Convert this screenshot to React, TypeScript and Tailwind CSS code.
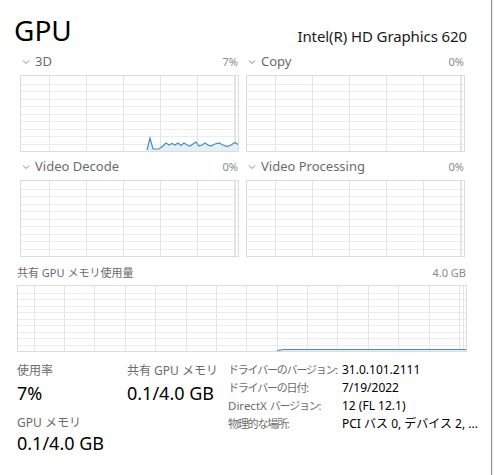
import React from 'react';

const font = { fontFamily: '"Noto Sans", "Noto Sans CJK JP", sans-serif' };

type GridProps = {
  w: number;
  h: number;
  step: number;
  offset: number;
  rows: number;
  extra?: number[];
  line?: string;
};

function Grid({ w, h, step, offset, rows, extra = [], line }: GridProps) {
  const xs: number[] = [];
  for (let x = offset; x < w; x += step) xs.push(x);
  const ys: number[] = [];
  for (let i = 1; i < rows; i++) ys.push((h * i) / rows);
  return (
    <svg width={w} height={h} className="block">
      {ys.map((y) => (
        <line key={'h' + y} x1={0} x2={w} y1={Math.round(y) + 0.5} y2={Math.round(y) + 0.5} stroke="#ececec" strokeWidth={1} />
      ))}
      {[...xs, ...extra].map((x) => (
        <line key={'v' + x} x1={Math.round(x) + 0.5} x2={Math.round(x) + 0.5} y1={0} y2={h} stroke="#e4e4e4" strokeWidth={1} />
      ))}
      {line && (
        <>
          <path d={`${line} L${w},${h} L${line.split(' ')[0].slice(1).split(',')[0]},${h} Z`} fill="#e3f0f8" stroke="none" />
          <path d={line} fill="none" stroke="#4a8db7" strokeWidth={1.2} />
        </>
      )}
    </svg>
  );
}

function Chevron() {
  return (
    <svg width="8" height="6" viewBox="0 0 8 6" className="mr-[5px]">
      <path d="M1 1.5 L4 4.5 L7 1.5" fill="none" stroke="#8a8a8a" strokeWidth="1" />
    </svg>
  );
}

function Engine({ name, value, line }: { name: string; value: string; line?: string }) {
  return (
    <div className="w-[218px]">
      <div className="flex items-center justify-between h-[16px] text-[13px] text-[#6b6b6b]">
        <div className="flex items-center pl-[2px]">
          <Chevron />
          <span>{name}</span>
        </div>
        <span className="text-[11px] text-[#8a8a8a]">{value}</span>
      </div>
      <div className="mt-[5px] border border-[#dcdcdc] h-[77px] w-[219px]">
        <Grid w={217} h={75} step={37} offset={28} rows={10} extra={[214]} line={line} />
      </div>
    </div>
  );
}

const spark =
  'M126,74 L129,62 L132,73 L138,73 L142,70 L145,67 L148,69 L151,67.5 L154,69 L157,67 L160,69.5 L163,67 L166,69 L169,70 L172,68 L175,66 L178,70 L181,69 L184,67 L187,69 L190,70 L194,68 L198,67 L202,69 L206,70.5 L210,69 L214,66.5 L217,68.5';

const label = 'h-[18px] leading-[18px] text-[11.5px] text-[#6b6b6b] whitespace-nowrap overflow-hidden';
const jp = 'text-[11px] tracking-[-1.2px]';
const value = 'h-[18px] leading-[18px] text-[12px] text-black whitespace-nowrap overflow-hidden';

export default function App() {
  return (
    <div className="flex w-[494px] h-[475px] bg-white overflow-hidden" style={font}>
      <div className="w-[491px] h-full relative">
        <div className="flex items-end justify-between pl-[14px] pr-[24px] pt-[13px]">
          <h1 className="text-[28px] leading-[34px] text-black">GPU</h1>
          <span className="text-[15px] leading-[20px] text-[#1a1a1a] mb-[1px] tracking-[-0.1px]">Intel(R) HD Graphics 620</span>
        </div>

        <div className="flex gap-[8px] pl-[20px] mt-[7px]">
          <Engine name="3D" value="7%" line={spark} />
          <Engine name="Copy" value="0%" />
        </div>

        <div className="flex gap-[8px] pl-[20px] mt-[7px]">
          <Engine name="Video Decode" value="0%" />
          <Engine name="Video Processing" value="0%" />
        </div>

        <div className="pl-[17px] pr-[25px] mt-[8px]">
          <div className="flex items-center justify-between h-[16px] text-[11px] text-[#6b6b6b]">
            <span>共有 GPU メモリ使用量</span>
            <span className="text-[#8a8a8a]">4.0 GB</span>
          </div>
          <div className="mt-[4px] border border-[#dcdcdc] w-[450px] h-[67px]">
            <Grid
              w={448}
              h={65}
              step={30.4}
              offset={15.5}
              rows={10}
              extra={[445]}
              line="M259,64.5 L266,63.5 L448,63.5"
            />
          </div>
        </div>

        <div className="flex items-start pl-[17px] mt-[10px]">
          <div className="w-[110px]">
            <div className="text-[12px] leading-[17px] text-[#6b6b6b]">使用率</div>
            <div className="text-[18px] leading-[24px] text-black mt-[2px]">7%</div>
            <div className="text-[12px] leading-[17px] text-[#6b6b6b] mt-[9px]">GPU メモリ</div>
            <div className="text-[18px] leading-[24px] text-black">0.1/4.0 GB</div>
          </div>
          <div className="w-[101px]">
            <div className="text-[12px] leading-[17px] text-[#6b6b6b]">共有 GPU メモリ</div>
            <div className="text-[18px] leading-[24px] text-black mt-[2px]">0.1/4.0 GB</div>
          </div>
          <div className="grid grid-cols-[114px_1fr] content-start -mt-[1px]">
            <span className={label}>
              <span className={jp}>ドライバーのバージョン:</span>
            </span>
            <span className={value}>31.0.101.2111</span>
            <span className={label}>
              <span className={jp}>ドライバーの日付:</span>
            </span>
            <span className={value}>7/19/2022</span>
            <span className={label}>
              DirectX <span className={jp}>バージョン:</span>
            </span>
            <span className={value}>12 (FL 12.1)</span>
            <span className={label}>
              <span className={jp}>物理的な場所:</span>
            </span>
            <span className={value}>PCI バス 0, デバイス 2, ...</span>
          </div>
        </div>
      </div>
      <div className="w-px h-full bg-[#8c8c8c]" />
      <div className="w-[2px] h-full bg-[#f3f3f3]" />
    </div>
  );
}
